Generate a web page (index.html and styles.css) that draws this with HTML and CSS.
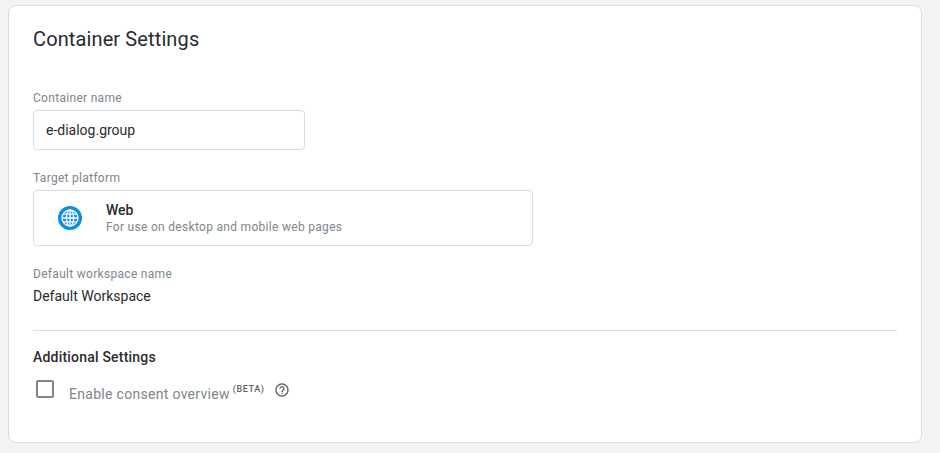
FILE: index.html
```html
<!DOCTYPE html>
<html lang="en">
<head>
  <meta charset="UTF-8" />
  <title>Container Settings</title>
  <link rel="stylesheet" href="styles.css">
</head>
<body>

  <div class="card">
    <h2 class="card-title">Container Settings</h2>

    <div class="field-label name-label">Container name</div>
    <div class="text-box">e-dialog.group</div>

    <div class="field-label platform-label">Target platform</div>
    <div class="platform-box">
      <svg class="globe" width="24" height="24" viewBox="0 0 24 24" aria-hidden="true">
        <circle cx="12" cy="12" r="12" fill="#0b8ee8"/>
        <g fill="none" stroke="#fff" stroke-width="1.3">
          <circle cx="12" cy="12" r="8"/>
          <ellipse cx="12" cy="12" rx="3.6" ry="8"/>
          <path d="M12 4v16M4 12h16M5.2 8.2h13.6M5.2 15.8h13.6"/>
        </g>
      </svg>
      <div class="platform-text">
        <div class="platform-name">Web</div>
        <div class="platform-desc">For use on desktop and mobile web pages</div>
      </div>
    </div>

    <div class="field-label workspace-label">Default workspace name</div>
    <div class="workspace-value">Default Workspace</div>

    <hr class="divider">

    <h3 class="section-title">Additional Settings</h3>
    <div class="consent-row">
      <span class="checkbox"></span>
      <span class="consent-label">Enable consent overview</span>
      <span class="beta">(BETA)</span>
      <svg class="help" width="16" height="16" viewBox="0 0 24 24" aria-hidden="true">
        <path fill="#5f6368" d="M11 18h2v-2h-2v2zm1-16C6.48 2 2 6.48 2 12s4.48 10 10 10 10-4.48 10-10S17.52 2 12 2zm0 18c-4.41 0-8-3.59-8-8s3.59-8 8-8 8 3.59 8 8-3.59 8-8 8zm0-14c-2.21 0-4 1.79-4 4h2c0-1.1.9-2 2-2s2 .9 2 2c0 2-3 1.75-3 5h2c0-2.25 3-2.5 3-5 0-2.21-1.79-4-4-4z"/>
      </svg>
    </div>
  </div>

</body>
</html>
```

FILE: styles.css
```css
html, body {
  height: 100%;
}

body {
  margin: 0;
  padding: 5px 18px 0 8px;
  box-sizing: border-box;
  overflow: hidden;
  font-family: Roboto, sans-serif;
  color: #2a2b2e;
  background-color: #f1f3f4;
  background-image: radial-gradient(#e8eaed 0.5px, transparent 0.6px);
  background-size: 8px 8px;
}

.card {
  height: 438px;
  box-sizing: border-box;
  padding: 20px 24px 0 24px;
  background: #fff;
  border: 1px solid #dadce0;
  border-radius: 8px;
}

.card-title {
  margin: 0;
  font-size: 20px;
  font-weight: 400;
  line-height: 26px;
  letter-spacing: 0.12px;
}

.field-label {
  font-size: 12px;
  line-height: 16px;
  letter-spacing: 0.3px;
  color: #80868b;
}

.name-label {
  margin-top: 38px;
}

.text-box {
  width: 272px;
  height: 40px;
  box-sizing: border-box;
  margin-top: 4px;
  padding: 0 12px;
  font-size: 14px;
  line-height: 38px;
  border: 1px solid #dadce0;
  border-radius: 4px;
}

.platform-label {
  margin-top: 20px;
}

.platform-box {
  display: flex;
  align-items: center;
  width: 500px;
  height: 56px;
  box-sizing: border-box;
  margin-top: 4px;
  padding-left: 24px;
  border: 1px solid #dadce0;
  border-radius: 4px;
}

.platform-text {
  margin-left: 24px;
}

.platform-name {
  font-size: 14px;
  font-weight: 500;
  line-height: 18px;
}

.platform-desc {
  font-size: 12px;
  line-height: 16px;
  letter-spacing: 0.3px;
  color: #80868b;
}

.workspace-label {
  margin-top: 20px;
}

.workspace-value {
  margin-top: 4px;
  font-size: 14px;
  line-height: 20px;
}

.divider {
  height: 1px;
  margin: 24px 0 0 0;
  border: 0;
  background: #dadce0;
}

.section-title {
  margin: 16px 0 0 0;
  font-size: 14px;
  font-weight: 500;
  line-height: 20px;
  letter-spacing: 0.2px;
}

.consent-row {
  display: flex;
  align-items: flex-start;
  margin-top: 10px;
}

.checkbox {
  width: 18px;
  height: 18px;
  box-sizing: border-box;
  margin: 3px 0 0 3px;
  border: 2px solid #80868b;
  border-radius: 2px;
}

.consent-label {
  margin: 8px 0 0 15px;
  font-size: 14px;
  line-height: 18px;
  letter-spacing: 0.3px;
  color: #80868b;
}

.beta {
  margin: 6px 0 0 3px;
  font-size: 9px;
  font-weight: 500;
  line-height: 12px;
  letter-spacing: 0.6px;
  color: #5f6368;
}

.help {
  margin: 5px 0 0 9px;
}
```
